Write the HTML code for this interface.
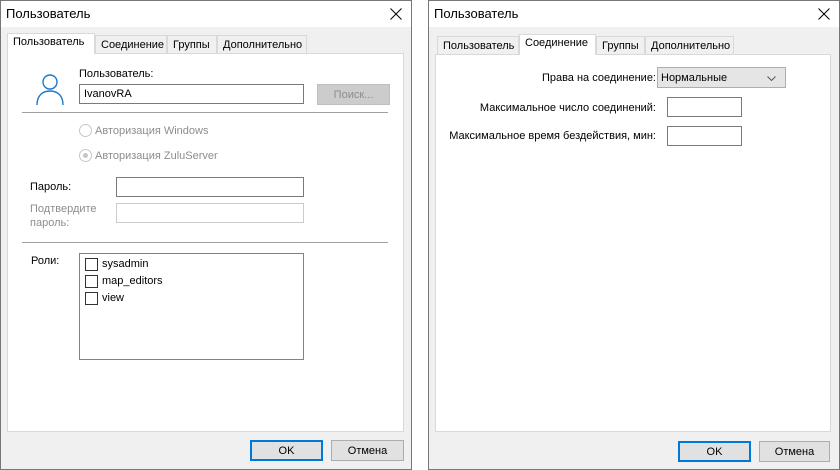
<!DOCTYPE html>
<html><head><meta charset="utf-8"><style>
*{box-sizing:border-box;margin:0;padding:0}
body{width:840px;height:470px;background:#fff;position:relative;overflow:hidden;font-family:"Liberation Sans",sans-serif;font-size:11px;color:#000}
.a{position:absolute;white-space:nowrap}
.dlg{position:absolute;top:0;height:470px;background:#f0f0f0;box-shadow:inset 0 0 0 1px #777}
.tb{position:absolute;left:1px;right:1px;top:1px;height:26px;background:#fff;font-size:13px;padding:5px 0 0 5px}
.panel{position:absolute;background:#fff;border:1px solid #d9d9d9}
.tab{position:absolute;height:18px;background:#f0f0f0;border:1px solid #d9d9d9;border-bottom:none;padding:3px 0 0 5px;white-space:nowrap}
.tab.s{background:#fff;height:21px;padding-top:2px;z-index:2}
.inp{position:absolute;background:#fff;border:1px solid #7a7a7a}
.btn{position:absolute;height:21px;background:#e1e1e1;border:1px solid #adadad;text-align:center;padding-top:4px}
.ok{border:2px solid #0078d7;padding-top:3px}
.hr{position:absolute;height:1px;background:#a0a0a0}
.gray{color:#8d8d8d}
.cb{position:absolute;width:13px;height:13px;border:1px solid #333;background:#fff}
.rd{position:absolute;width:13px;height:13px;border:1px solid #c6c6c6;border-radius:50%;background:#fff}
</style></head><body>
<div class="dlg" style="left:0;width:412px">
 <div class="tb">Пользователь<svg class="a" style="right:9px;top:7px" width="12" height="12"><path d="M0.5 0.5L11.5 11.5M11.5 0.5L0.5 11.5" stroke="#000" stroke-width="1"/></svg></div>
 <div class="panel" style="left:7px;top:53px;width:397px;height:379px"></div>
 <div class="tab s" style="left:7px;top:33px;width:88px">Пользователь</div>
 <div class="tab" style="left:95px;top:35px;width:72px">Соединение</div>
 <div class="tab" style="left:167px;top:35px;width:50px">Группы</div>
 <div class="tab" style="left:217px;top:35px;width:90px">Дополнительно</div>
 <svg class="a" style="left:35px;top:72px" width="30" height="33" viewBox="0 0 30 33"><circle cx="15" cy="10" r="7" fill="none" stroke="#1979ca" stroke-width="1.4"/><path d="M2 33 C2 23 8 19 15 19 C22 19 28 23 28 33" fill="none" stroke="#1979ca" stroke-width="1.4"/></svg>
 <div class="a" style="left:79px;top:68px">Пользователь:</div>
 <div class="inp" style="left:79px;top:84px;width:225px;height:20px;padding:3px 0 0 4px">IvanovRA</div>
 <div class="btn gray" style="left:317px;top:84px;width:73px;height:21px;background:#ccc;border-color:#bfbfbf">Поиск...</div>
 <div class="hr" style="left:22px;top:112px;width:366px"></div>
 <div class="rd" style="left:79px;top:124px"></div><div class="a gray" style="left:95px;top:125px">Авторизация Windows</div>
 <div class="rd" style="left:79px;top:149px"><div class="a" style="left:3px;top:3px;width:5px;height:5px;border-radius:50%;background:#c6c6c6"></div></div><div class="a gray" style="left:95px;top:150px">Авторизация ZuluServer</div>
 <div class="a" style="left:30px;top:181px">Пароль:</div>
 <div class="inp" style="left:116px;top:177px;width:188px;height:20px"></div>
 <div class="a gray" style="left:30px;top:202px;line-height:14px">Подтвердите<br>пароль:</div>
 <div class="inp" style="left:116px;top:203px;width:188px;height:20px;border-color:#ccc"></div>
 <div class="hr" style="left:22px;top:242px;width:366px"></div>
 <div class="a" style="left:31px;top:255px">Роли:</div>
 <div class="inp" style="left:79px;top:253px;width:225px;height:107px;border-color:#828282"></div>
 <div class="cb" style="left:85px;top:258px"></div><div class="a" style="left:102px;top:258px">sysadmin</div>
 <div class="cb" style="left:85px;top:275px"></div><div class="a" style="left:102px;top:275px">map_editors</div>
 <div class="cb" style="left:85px;top:292px"></div><div class="a" style="left:102px;top:292px">view</div>
 <div class="btn ok" style="left:250px;top:440px;width:73px">OK</div>
 <div class="btn" style="left:331px;top:440px;width:73px">Отмена</div>
</div>
<div class="dlg" style="left:428px;width:412px">
 <div class="tb">Пользователь<svg class="a" style="right:9px;top:7px" width="12" height="12"><path d="M0.5 0.5L11.5 11.5M11.5 0.5L0.5 11.5" stroke="#000" stroke-width="1"/></svg></div>
 <div class="panel" style="left:7px;top:54px;width:396px;height:378px"></div>
 <div class="tab" style="left:9px;top:36px;width:82px">Пользователь</div>
 <div class="tab s" style="left:91px;top:34px;width:77px">Соединение</div>
 <div class="tab" style="left:168px;top:36px;width:49px">Группы</div>
 <div class="tab" style="left:217px;top:36px;width:89px">Дополнительно</div>
 <div class="a" style="right:184px;top:72px">Права на соединение:</div>
 <div class="a" style="left:229px;top:67px;width:129px;height:21px;background:#e5e5e5;border:1px solid #adadad;padding:4px 0 0 3px">Нормальные<svg class="a" style="right:9px;top:8px" width="9" height="5"><path d="M0.5 0.5L4.5 4.5L8.5 0.5" fill="none" stroke="#555"/></svg></div>
 <div class="a" style="right:184px;top:102px">Максимальное число соединений:</div>
 <div class="inp" style="left:239px;top:97px;width:75px;height:20px"></div>
 <div class="a" style="right:184px;top:130px">Максимальное время бездействия, мин:</div>
 <div class="inp" style="left:239px;top:126px;width:75px;height:20px"></div>
 <div class="btn ok" style="left:250px;top:441px;width:73px">OK</div>
 <div class="btn" style="left:331px;top:441px;width:71px">Отмена</div>
</div>
</body></html>
